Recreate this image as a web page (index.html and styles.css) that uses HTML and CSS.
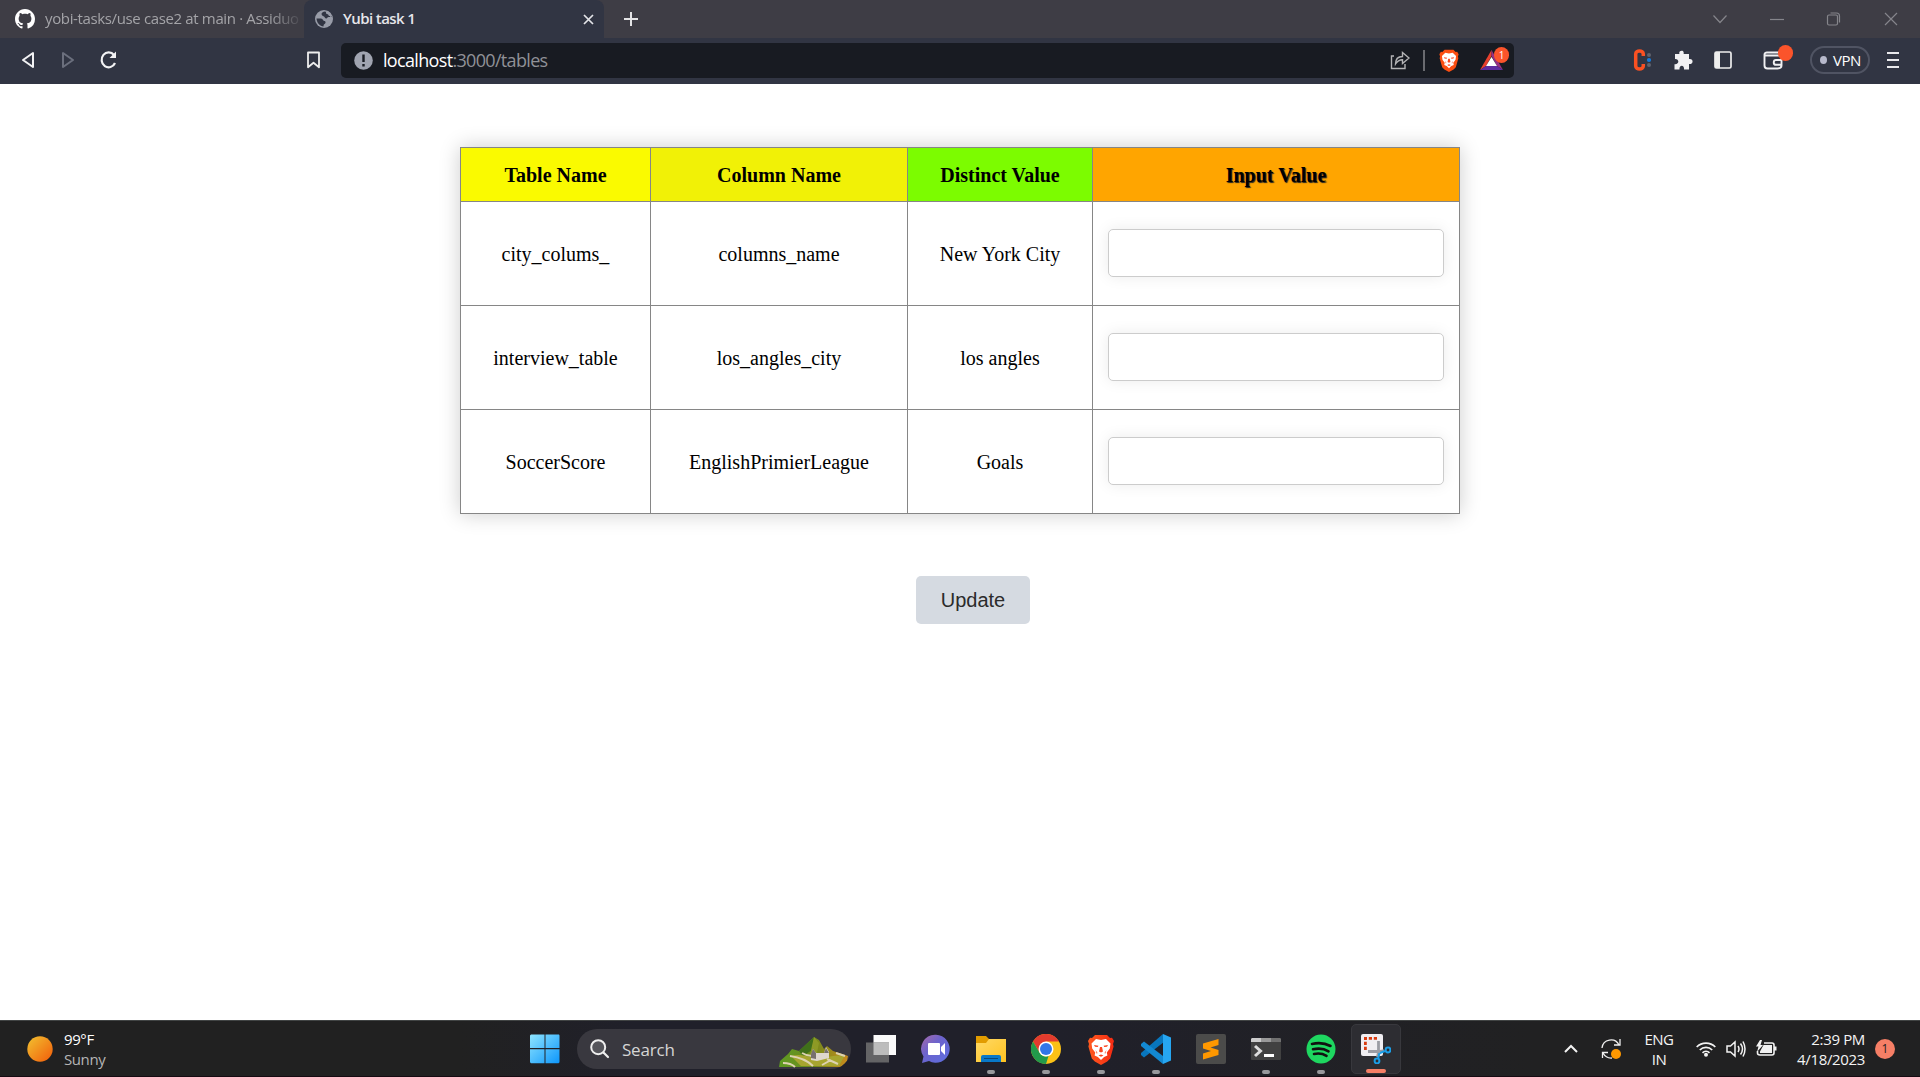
FILE: index.html
```html
<!DOCTYPE html>
<html lang="en">
<head>
<meta charset="utf-8">
<title>Yubi task 1</title>
<link rel="stylesheet" href="styles.css">
</head>
<body>
<svg width="0" height="0" class="defs">
  <defs>
    <linearGradient id="sun" x1="0" y1="0" x2="1" y2="1"><stop offset="0" stop-color="#f2c230"/><stop offset="1" stop-color="#f25c0a"/></linearGradient>
    <linearGradient id="win" x1="0" y1="0" x2="1" y2="1"><stop offset="0" stop-color="#8fe5ff"/><stop offset="1" stop-color="#0d96fb"/></linearGradient>
    <linearGradient id="folder" x1="0" y1="0" x2="1" y2="1"><stop offset="0" stop-color="#ffd966"/><stop offset="1" stop-color="#ffc320"/></linearGradient>
    <linearGradient id="chat" x1="0" y1="0" x2="1" y2="1"><stop offset="0" stop-color="#a86aa8"/><stop offset=".4" stop-color="#6d63cc"/><stop offset="1" stop-color="#5b6ee0"/></linearGradient>
    <linearGradient id="brave"><stop offset="0" stop-color="#ff5a1f"/><stop offset="1" stop-color="#f52a12"/></linearGradient>
    <linearGradient id="hill" x1="0" y1="0" x2="1" y2="0"><stop offset="0" stop-color="#5e9a22"/><stop offset=".5" stop-color="#6f8a1c"/><stop offset="1" stop-color="#c98a1c"/></linearGradient>
    <symbol id="lion" viewBox="0 0 26 31">
      <path d="M7 1h12l3 3 2-.3 2 3.300-1 3 .6 2.500-3.400 12-3 3-6.200 3.500-6.200-3.500-3-3L.4 12.500 1 10 0 7l2-3.300L4 4z"/>
      <path fill="#fff" d="M8 5l5 1 5-1 4.500 4.500-.7 5-3 4 .6 3-3.300 1.500L13 26l-3.100-3-3.300-1.500.6-3-3-4-.7-5z"/>
      <path fill="#fb4520" d="M6 11l4.500.7-.8 1.300-2.700-.3zM20 11l-4.500.7.8 1.300 2.700-.3zM12 13h2l1 4.500-2 1-2-1zM7.500 16l2 3-.7.700zM18.500 16l-2 3 .7.700zM10.500 21.500l2.500-1 2.500 1-2.500 1.300z"/>
    </symbol>
  </defs>
</svg>
<div class="screen">
  <header class="browser">
    <div class="tabs">
      <div class="tab">
        <svg class="github" width="20" height="20" viewBox="0 0 16 16"><path fill="#fff" d="M8 0C3.580 0 0 3.580 0 8c0 3.540 2.290 6.530 5.470 7.590.4.070.55-.17.55-.38 0-.19-.01-.82-.01-1.490-2.010.37-2.530-.49-2.690-.94-.09-.23-.48-.94-.82-1.130-.28-.15-.68-.52-.01-.53.63-.01 1.080.58 1.230.82.72 1.210 1.870.87 2.330.66.070-.52.28-.87.51-1.070-1.780-.2-3.640-.89-3.640-3.950 0-.87.31-1.590.82-2.150-.08-.2-.36-1.020.08-2.120 0 0 .67-.21 2.200.82.64-.18 1.320-.27 2-.27s1.360.09 2 .27c1.530-1.040 2.200-.82 2.200-.82.44 1.100.16 1.920.08 2.120.51.56.82 1.270.82 2.150 0 3.070-1.870 3.750-3.650 3.950.29.25.54.73.54 1.480 0 1.070-.01 1.930-.01 2.200 0 .21.15.46.55.38A8.010 8.010 0 0 0 16 8c0-4.420-3.580-8-8-8z"/></svg>
        <span class="tab-title">yobi-tasks/use case2 at main · Assiduo</span>
      </div>
      <div class="tab active">
        <svg width="18" height="18" viewBox="0 0 18 18"><circle cx="9" cy="9" r="9" fill="#989ca8"/><path fill="#313543" d="M10 1.500C6 2 5.500 5 8.500 6.200c1.500.5 1 2.300 3 2.300.5 0 1-1.500 2-1.500h3C16 4 13.500 1.700 10 1.500zM1.500 8.500c.2 4.500 3.500 7.500 7 8 .2-1.500 0-2 1-2.500 1.500-.7 1.500-3-.5-3-1 0-1-2.500-3-2.500z"/><path fill="#989ca8" d="M10 1.500c2 .7 0 2 2 2.500s1 2 3 2l1 3V4l-3-3z"/></svg>
        <span class="tab-title">Yubi task 1</span>
        <svg class="tab-close" width="11" height="11" viewBox="0 0 11 11"><path stroke="#e3e4e8" stroke-width="1.700" d="M1 1l9 9M10 1l-9 9"/></svg>
      </div>
      <svg class="new-tab" width="16" height="16" viewBox="0 0 16 16"><path stroke="#e4e4e6" stroke-width="2" d="M8 1v14M1 8h14"/></svg>
      <div class="window-buttons">
        <svg width="16" height="16"><path d="M1.500 4.500l6.500 7 6.500-7"/></svg>
        <svg width="16" height="16"><path d="M1 8.500h14"/></svg>
        <svg width="16" height="16"><path d="M4.500 2h6a3 3 0 0 1 3 3v6.500"/><rect x="1.500" y="4" width="10" height="10" rx="1.500"/></svg>
        <svg width="16" height="16"><path d="M2 2l12 12M14 2L2 14"/></svg>
      </div>
    </div>
    <div class="toolbar">
      <div class="nav">
        <svg width="18" height="20" viewBox="0 0 18 20"><path fill="none" stroke="#f2f2f4" stroke-width="2" stroke-linejoin="round" d="M14 3v14L4 10z"/></svg>
        <svg width="18" height="20" viewBox="0 0 18 20"><path fill="none" stroke="#6b6f7d" stroke-width="2" stroke-linejoin="round" d="M4 3v14l10-7z"/></svg>
        <svg width="18" height="20" viewBox="0 0 18 20"><path fill="none" stroke="#f2f2f4" stroke-width="2.200" d="M15 5A7 7.500 0 1 0 16 13"/><path fill="#f2f2f4" d="M17 1.500V8h-6.500z"/></svg>
      </div>
      <svg class="bookmark" width="16" height="18" viewBox="0 0 16 18"><path fill="none" stroke="#eee" stroke-width="1.800" stroke-linejoin="round" d="M2 1.500h11v14.800l-5.500-4.500L2 16.300z"/></svg>
      <div class="address">
        <svg class="site-info" width="19" height="19" viewBox="0 0 19 19"><circle cx="9.500" cy="9.500" r="9.300" fill="#a0a4b0"/><path fill="#181b22" d="M8.300 3.500h2.400v7.500H8.300zM8.300 13h2.400v2.400H8.300z"/></svg>
        <span class="url"><b>localhost</b>:3000/tables</span>
        <div class="address-actions">
          <svg width="20" height="20" viewBox="0 0 20 20"><path fill="none" stroke="#b4b4b6" stroke-width="1.400" d="M4 6H1.500v12.500H15V14M5.500 14c0-5 3-7.500 7-7.500V2.500L19 8l-6.500 5.500v-3.700c-3 0-5 1-7 4.200z"/></svg>
          <i class="divider"></i>
          <svg width="20" height="23" fill="#fb4e12"><use href="#lion"/></svg>
          <div class="rewards">
            <svg width="23" height="20" viewBox="0 0 23 20"><path fill="#e8402d" d="M11.500 0L0 20l6-4 5.500-10z"/><path fill="#952f83" d="M11.500 0L23 20l-6-4-5.500-10z"/><path fill="#5e2da0" d="M0 20h23l-6-4H6z"/><path fill="#fff" d="M11.500 7L6 16h11z"/></svg>
            <span class="badge">1</span>
          </div>
        </div>
      </div>
      <div class="extensions">
        <svg width="19" height="22" viewBox="0 0 19 22"><path fill="none" stroke="#fa5122" stroke-width="3.500" d="M10.300 7V5c0-4-7.600-4-7.600 0v12c0 4 7.600 4 7.600 0v-2"/><circle cx="16" cy="6" r="2" fill="#60636d"/><circle cx="16" cy="11" r="2.100" fill="#137cdc"/><circle cx="16" cy="16" r="2" fill="#60636d"/></svg>
        <svg width="20" height="20" viewBox="0 0 20 20"><path fill="#f1f1f3" d="M2 4h4.500C4.800.5 11.800-.8 10.600 4H16v5c5-1 4.500 6 0 5v5.500h-5c.7-5-5-5-4.500 0H1.500v-5.200c5 .5 5-5.600.5-5.300z"/></svg>
        <svg width="18" height="18" viewBox="0 0 18 18"><rect x="1" y="1" width="16" height="16" rx="1.500" fill="none" stroke="#eee" stroke-width="1.700"/><path fill="#eee" d="M1 1h5v16H1z"/></svg>
        <div class="wallet">
          <svg width="21" height="19" viewBox="0 0 21 19"><path fill="none" stroke="#f1f1f3" stroke-width="1.900" d="M18 7V4.500H1.500v10c0 2 1 3 3 3h10c2.500 0 4-.8 4-3V9h-5.500c-3 0-3 4.800 0 4.800h5M1.500 5V3.500c0-1.500 1-2 2.500-2h12"/></svg>
          <span class="badge"></span>
        </div>
        <div class="vpn"><i></i>VPN</div>
        <svg width="12" height="18"><path stroke="#e9e9ec" stroke-width="2" d="M0 2h12M0 9h12M0 16h12"/></svg>
      </div>
    </div>
  </header>

  <main class="page">
    <table class="values">
      <colgroup><col class="c1"><col class="c2"><col class="c3"><col class="c4"></colgroup>
      <thead><tr><th class="h-table">Table Name</th><th class="h-column">Column Name</th><th class="h-distinct">Distinct Value</th><th class="h-input">Input Value</th></tr></thead>
      <tbody>
        <tr><td>city_colums_</td><td>columns_name</td><td>New York City</td><td><input type="text"></td></tr>
        <tr><td>interview_table</td><td>los_angles_city</td><td>los angles</td><td><input type="text"></td></tr>
        <tr><td>SoccerScore</td><td>EnglishPrimierLeague</td><td>Goals</td><td><input type="text"></td></tr>
      </tbody>
    </table>
    <button class="update">Update</button>
  </main>

  <footer class="taskbar">
    <div class="weather">
      <svg width="26" height="26"><circle cx="13" cy="13" r="12.700" fill="url(#sun)"/></svg>
      <div><span class="temp">99°F</span><span class="sky">Sunny</span></div>
    </div>
    <div class="apps">
      <svg class="start" width="30" height="30" viewBox="0 0 30 30"><path fill="url(#win)" d="M1 .5h13.500V14H0V1.500zM15.500.5H29l.5 1V14h-14zM0 15.200h14.500v14H1l-1-1zM15.500 15.200h14v13l-1 1h-13z"/></svg>
      <div class="search">
        <svg width="20" height="20" viewBox="0 0 20 20"><circle cx="8.200" cy="8.200" r="7" fill="#55555b" stroke="#eee" stroke-width="2"/><path stroke="#eee" stroke-width="2.200" stroke-linecap="round" d="M13.500 13.500L18 18"/></svg>
        <span>Search</span>
        <svg class="landscape" width="70" height="32" viewBox="0 0 70 32">
          <path fill="url(#hill)" d="M0 31l1-6 8-7 4-5 7 2L35 1l5 3 5 9 3-3 6 5 9 3 6 2-1 5-6 6z"/>
          <path fill="#3f6f1a" d="M20 15L35 1l-2 13-9 6z"/><path fill="#8d9a25" d="M35 1l5 6-2 10 6 9-14-3z"/>
          <path fill="#a7a52f" d="M12 20q10-3 24 3l18-3 12-1-6 11H22z"/>
          <path fill="none" stroke="#ddd2b0" stroke-width="2" d="M4 27q8 0 12 4M11 20q15 2 23 10M23 17q5 3 10 3M48 23l11 5M57 17l9 3M43 29l9-5"/>
          <path fill="#ded7cd" d="M32 19l2-6 3 4h8l2-6 3 5v6l-12 3-6-1z"/><path fill="#77706e" d="M32 18l2-5 3 4v6l-5-1zM45 17l2-5 3 5z"/>
        </svg>
      </div>
      <div class="app"><svg width="30" height="30" viewBox="0 0 30 30"><path fill="#fafafa" d="M7.500 1H30v20H7.500z"/><path fill="#646466" d="M0 8.500h23v20H0z"/><path fill="#bcbcbc" d="M7.500 8.500H23V21H7.500z"/></svg></div>
      <div class="app"><svg width="30" height="30" viewBox="0 0 30 30"><path fill="url(#chat)" d="M15 .8a14 14 0 1 1-7 26.300L1 29l1.500-6.500A14 14 0 0 1 15 .8z"/><rect x="7" y="9" width="12" height="12" rx="1" fill="#fff"/><path fill="#fff" d="M20 13l4-4v12l-4-4z"/></svg></div>
      <div class="app open"><svg width="30" height="30" viewBox="0 0 30 30"><path fill="#e29c00" d="M0 2h10l3 3v5H0z"/><path fill="url(#folder)" d="M0 9h10l3-4h17v23H0z"/><path fill="#0878c8" d="M5 28v-5q0-2 2-2h16q2 0 2 2v5z"/><path stroke="#07477b" stroke-width="1" d="M8 24.500h14"/></svg></div>
      <div class="app open"><svg width="30" height="30" viewBox="0 0 30 30"><circle cx="15" cy="15" r="15" fill="#fbc116"/><path fill="#e33b2e" d="M2 7.500a15 15 0 0 1 26 0H15l-6.500 11z"/><path fill="#229a4b" d="M2 7.500l6.500 11a7.500 7.500 0 0 0 9 3.600L15 30A15 15 0 0 1 2 7.500z"/><circle cx="15" cy="15" r="7.500" fill="#fff"/><circle cx="15" cy="15" r="6" fill="#3276e8"/></svg></div>
      <div class="app open"><svg width="26" height="31" fill="url(#brave)"><use href="#lion"/></svg></div>
      <div class="app open"><svg width="30" height="30" viewBox="0 0 30 30"><path fill="#0876bd" d="M22 0L0 19v2l3 2.500L23 8z"/><path fill="#1389d2" d="M3 7.500L0 10v2l22 18V22z"/><path fill="#26a6f1" d="M22 0l8 3.500v23L22 30z"/></svg></div>
      <div class="app"><svg width="30" height="30" viewBox="0 0 30 30"><rect width="30" height="30" rx="2" fill="#4b4b4a"/><path fill="#ff9800" d="M7 9.500L22.500 5v6l-8 2.500 8 2.500v5L7 25.500v-6l8-2.500-8-2.500z"/></svg></div>
      <div class="app open"><svg width="30" height="30" viewBox="0 0 30 30"><rect y="4" width="30" height="22" rx="1" fill="#414141"/><path fill="#ccc" d="M0 8V5l1-1h9v4z"/><path fill="#999" d="M10 4h10v4H10z"/><path fill="#707070" d="M20 4h9l1 1v3H20z"/><path fill="none" stroke="#ddd" stroke-width="3" d="M4 12l5.500 5L4 22"/><path stroke="#fff" stroke-width="3" d="M13 21.500h10"/></svg></div>
      <div class="app open"><svg width="30" height="30" viewBox="0 0 30 30"><circle cx="15" cy="15" r="14.500" fill="#1ed760"/><path fill="none" stroke="#111" stroke-width="2.600" stroke-linecap="round" d="M6 10q10-2.500 18.500 2M7 15.300q9-2 15.500 2M8 20q7-1.500 12.500 1.800"/></svg></div>
      <div class="app open current"><svg width="30" height="30" viewBox="0 0 30 30"><rect width="22" height="22" rx="2" fill="#f0eef2"/><path fill="none" stroke="#d83b10" stroke-width="2.800" stroke-dasharray="3.200 1.800" d="M4.400 16V4.400H17"/><path stroke="#9b9ca4" stroke-width="2.800" d="M17.500 7v11l-1 5M7 17.500h11l5-1"/><g fill="none" stroke="#1b9de6" stroke-width="2"><circle cx="16" cy="27" r="2.400"/><circle cx="27" cy="16" r="2.400"/><path d="M19 19l5-2M18.500 19L17 25"/></g></svg></div>
    </div>
    <div class="tray">
      <svg class="chevron" width="14" height="9"><path fill="none" stroke="#f2f2f2" stroke-width="2" d="M1 8l6-6 6 6"/></svg>
      <svg class="sync" width="21" height="22" viewBox="0 0 21 22"><path fill="none" stroke="#f0f0f0" stroke-width="1.300" d="M1 10a9 9 0 0 1 17-3M19 1v6h-6M1.500 20v-5.500H7M2 15q3 5.500 9 5"/><circle cx="15" cy="16" r="5" fill="#ff9800"/></svg>
      <div class="lang">ENG<br>IN</div>
      <svg class="wifi" width="20" height="16" viewBox="0 0 20 16"><g fill="none" stroke="#f2f2f2" stroke-width="1.700"><path d="M.7 6a13 13 0 0 1 18.600 0M3.800 9a8.800 8.800 0 0 1 12.400 0M6.500 11.800a5 5 0 0 1 7 0"/></g><circle cx="10" cy="13.800" r="2" fill="#f2f2f2"/></svg>
      <svg class="sound" width="20" height="18" viewBox="0 0 20 18"><g fill="none" stroke="#f2f2f2" stroke-width="1.500"><path d="M1 6h3.500L9 2v14l-4.500-4H1zM12 6q2 3 0 6M14.500 3.500q4 5.500 0 11M17 1.500q4 7.500 0 15"/></g></svg>
      <svg class="battery" width="21" height="17" viewBox="0 0 21 17"><path fill="none" stroke="#f2f2f2" stroke-width="1.600" d="M8 3h8q2 0 2 2v8q0 2-2 2H4q-2.500 0-2.500-2v-2"/><path fill="#f2f2f2" d="M7.500 5H16v8H4v-1.500zM18 6.500h2.500v4H18zM4 0L0 6.500h2.500L1 12l6-7H4.500L6 0z"/></svg>
      <div class="clock">2:39 PM<br>4/18/2023</div>
      <span class="notice">1</span>
    </div>
  </footer>
</div>
</body>
</html>
```
FILE: styles.css
```css
* { box-sizing: border-box; }
body { margin: 0; background: #fff; }
svg { display: block; flex: none; }
.defs { position: absolute; }
.screen { display: flex; flex-direction: column; width: 1920px; height: 1077px; overflow: hidden; font-family: "Open Sans", "Noto Sans", sans-serif; }

/* browser chrome */
.browser { flex: none; height: 84px; background: #313543; }
.tabs { display: flex; align-items: center; height: 38px; background: #3e3d45; }
.tab { display: flex; align-items: center; width: 304px; height: 38px; padding-left: 15px; gap: 10px; color: #a4a4a8; font-size: 15px; white-space: nowrap; }
.tab .tab-title { flex: 1; padding-bottom: 2px; letter-spacing: -.36px; mask-image: linear-gradient(90deg, #000 88%, transparent 102%); margin-right: 5px; }
.tab.active { width: 300px; padding: 0 10px 0 11px; background: #313543; border-radius: 8px 8px 0 0; color: #e6e6ea; font-weight: 600; }
.tab.active .tab-title { mask-image: none; letter-spacing: -.6px; }
.new-tab { margin-left: 19px; }
.window-buttons { display: flex; gap: 41px; margin-left: auto; margin-right: 21px; fill: none; stroke: #85858b; stroke-width: 1.2; }
.toolbar { display: flex; align-items: center; height: 46px; padding-bottom: 2px; }
.nav { display: flex; gap: 22px; margin-left: 19px; }
.bookmark { margin-left: 189px; }
.address { display: flex; align-items: center; width: 1173px; height: 35px; margin-left: 19px; padding: 0 12px 0 13px; background: #181b22; border-radius: 5px; }
.url { margin-left: 10px; color: #909197; font-size: 18px; letter-spacing: -.67px; }
.url b { color: #fff; font-weight: 400; }
.address-actions { display: flex; align-items: center; margin-left: auto; }
.divider { width: 2px; height: 21px; margin: 0 14px 0 13px; background: #6a6b70; }
.rewards, .wallet { position: relative; }
.rewards { margin-left: 21px; margin-right: -1px; }
.badge { position: absolute; background: #fb542b; color: #fff; border-radius: 8px; height: 16px; width: 15px; font-size: 10px; line-height: 16px; text-align: center; }
.rewards .badge { left: 14px; top: -3px; }
.wallet .badge { left: 15px; top: -6px; }
.extensions { display: flex; align-items: center; margin-left: 119px; }
.extensions > :nth-child(2) { margin-left: 21px; }
.extensions > :nth-child(3) { margin-left: 21px; }
.wallet { margin-left: 31px; }
.vpn { display: flex; align-items: center; gap: 6px; width: 60px; height: 28px; margin: 0 17px 0 26px; padding-left: 8px; border: 2px solid #505463; border-radius: 15px; color: #fff; font-size: 15px; letter-spacing: -.5px; }
.vpn i { width: 7px; height: 8px; border-radius: 50%; background: #b7b9cb; }

/* page */
.page { flex: 1; font-family: "Liberation Serif", serif; }
.values { width: 1000px; margin: 63px 0 0 460px; table-layout: fixed; border-collapse: collapse; box-shadow: 0 0 20px rgba(0,0,0,.2); font-size: 20px; line-height: 23px; text-align: center; }
.c1 { width: 190px; } .c2 { width: 257px; } .c3 { width: 185px; }
.values th, .values td { border: 1px solid #868686; padding: 0 15px 2px; color: #000; }
.values th { height: 54px; }
.values td { height: 104px; }
.values td:nth-child(-n+3), .values th { padding: 1px 5px 0; }
.h-table { background: #fafa00; }
.h-column { background: #f1f106; }
.h-distinct { background: #7cfc00; }
.h-input { background: #ffa500; text-shadow: 1px 1px 1px #222; }
.values input { display: block; width: 336px; height: 48px; border: 1px solid #ccc; border-radius: 5px; background: #fff; box-shadow: 0 0 15px rgba(0,0,0,.08); }
.update { display: block; width: 114px; height: 48px; margin: 62px 0 0 916px; padding: 0; border: 0; border-radius: 5px; background: #d5dae1; color: #2b2b2b; font: 20px "Liberation Sans", sans-serif; }

/* taskbar */
.taskbar { display: flex; flex: none; align-items: center; height: 57px; background: linear-gradient(90deg, #212121 24%, #20202a 33%, #20202a 55%, #212122 80%); border-top: 1px solid #414444; border-bottom: 1px solid #160a12; }
.weather { display: flex; align-items: center; gap: 11px; width: 530px; padding-left: 27px; color: #fff; font-size: 15px; line-height: 20px; letter-spacing: -.4px; }
.weather span { display: block; }
.weather .sky { color: #b5b5b5; }
.apps { display: flex; align-items: center; height: 55px; padding-top: 1px; }
.search { display: flex; align-items: center; width: 274px; height: 40px; margin-left: 17px; margin-right: 5px; padding-left: 13px; border-radius: 20px; overflow: hidden; background: #39383f; color: #d5d5d5; font-size: 17px; letter-spacing: -.2px; }
.search span { margin-left: 12px; padding-top: 1px; }
.landscape { margin: 6px 2px 0 auto; }
.app { position: relative; display: flex; align-items: center; justify-content: center; width: 50px; height: 50px; margin-right: 5px; border-radius: 5px; }
.app.open::after { content: ""; position: absolute; left: 21px; bottom: 0; width: 8px; height: 4px; border-radius: 2px; background: #98989c; }
.app.current { background: #2d2d32; border: 1px solid #38383d; }
.app.current::after { left: 14px; width: 20px; background: #f67f66; }
.tray { display: flex; align-items: center; margin-left: auto; margin-right: 25px; color: #f4f4f4; font-size: 15px; line-height: 20px; }
.sync { margin-left: 23px; }
.lang { width: 32px; margin-left: 21px; text-align: center; letter-spacing: -.5px; }
.wifi { margin-left: 21px; }
.sound { margin-left: 10px; }
.battery { margin-left: 10px; }
.clock { width: 90px; margin-left: 0; padding-right: 2px; text-align: right; letter-spacing: -.35px; white-space: nowrap; }
.notice { width: 20px; height: 20px; margin-left: 8px; border-radius: 50%; background: #f67f66; color: #222; font-size: 12px; text-align: center; }
```
